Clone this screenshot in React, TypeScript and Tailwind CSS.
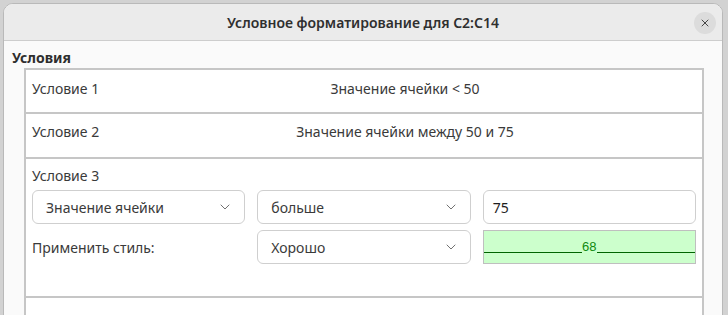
import { X, ChevronDown } from "lucide-react"

const font = { fontFamily: '"Noto Sans", "Open Sans", sans-serif' }

const Select = ({ value }: { value: string }) => (
    <div className="flex h-[34px] items-center justify-between rounded-[6px] border border-[#cfcfcf] bg-white pl-[13px] pr-[11px]">
        <span className="text-[14px] text-[#3a3a3a]">{value}</span>
        <ChevronDown size={16} strokeWidth={1.3} className="text-[#5a5a5a]" />
    </div>
)

const App = () => {
    return (
        <div
            className="h-[315px] w-[728px] overflow-hidden bg-[#d2d2d2] pl-[3px] pr-[5px] pt-[3px]"
            style={font}
        >
            <div className="flex h-[330px] flex-col overflow-hidden rounded-t-[10px] border border-[#b9b9b9] bg-[#fafafa]">
                {/* title bar */}
                <div className="relative flex h-[37px] shrink-0 items-center justify-center border-b border-[#cdcdcd] bg-[#ebebeb]">
                    <span className="text-[14px] font-semibold text-[#2f2f2f]">
                        Условное форматирование для C2:C14
                    </span>
                    <button
                        type="button"
                        className="absolute right-[6px] top-[8px] grid h-[22px] w-[22px] place-items-center rounded-full bg-[#dcdcdc] text-[#333]"
                    >
                        <X size={12} strokeWidth={1.8} />
                    </button>
                </div>

                <div className="flex flex-col px-[8px] pt-[8px]">
                    <p className="text-[14px] font-bold leading-[18px] text-[#2e2e2e]">Условия</p>

                    <div className="ml-[12px] mr-[10px] mt-[1px] flex flex-col border-2 border-[#c6c6c6] bg-white">
                        <div className="flex h-[42px] items-start pt-[8px] text-[14px] text-[#3a3a3a]">
                            <span className="w-[88px] shrink-0 pl-[6px]">Условие 1</span>
                            <span className="flex-1 pr-[6px] text-center">Значение ячейки &lt; 50</span>
                        </div>
                        <div className="h-[2px] bg-[#c6c6c6]" />
                        <div className="flex h-[43px] items-start pt-[7px] text-[14px] text-[#3a3a3a]">
                            <span className="w-[88px] shrink-0 pl-[6px]">Условие 2</span>
                            <span className="flex-1 pr-[6px] text-center">Значение ячейки между 50 и 75</span>
                        </div>
                        <div className="h-[2px] bg-[#c6c6c6]" />
                        <div className="flex h-[137px] flex-col px-[6px] pt-[6px] text-[14px] text-[#3a3a3a]">
                            <span>Условие 3</span>
                            <div className="mt-[4px] grid grid-cols-3 gap-x-[12px] gap-y-[6px]">
                                <Select value="Значение ячейки" />
                                <Select value="больше" />
                                <div className="flex h-[34px] items-center rounded-[6px] border border-[#cfcfcf] bg-white px-[9px] text-[14px] text-[#1e1e1e]">
                                    75
                                </div>
                                <div className="flex items-center">Применить стиль:</div>
                                <Select value="Хорошо" />
                                <div className="flex h-[34px] items-start border border-[#bfbfbf] bg-[#ccffcc] pt-[9px]">
                                    <div className="mt-[12px] h-px flex-1 bg-[#006400]" />
                                    <span
                                        className="text-[13px] leading-[14px] text-[#108a10]"
                                        style={{ fontFamily: '"Liberation Sans", Arial, sans-serif' }}
                                    >
                                        68
                                    </span>
                                    <div className="mt-[12px] h-px flex-1 bg-[#006400]" />
                                </div>
                            </div>
                        </div>
                        <div className="h-[2px] bg-[#c6c6c6]" />
                        <div className="h-[40px]" />
                    </div>
                </div>
            </div>
        </div>
    )
}

export default App
